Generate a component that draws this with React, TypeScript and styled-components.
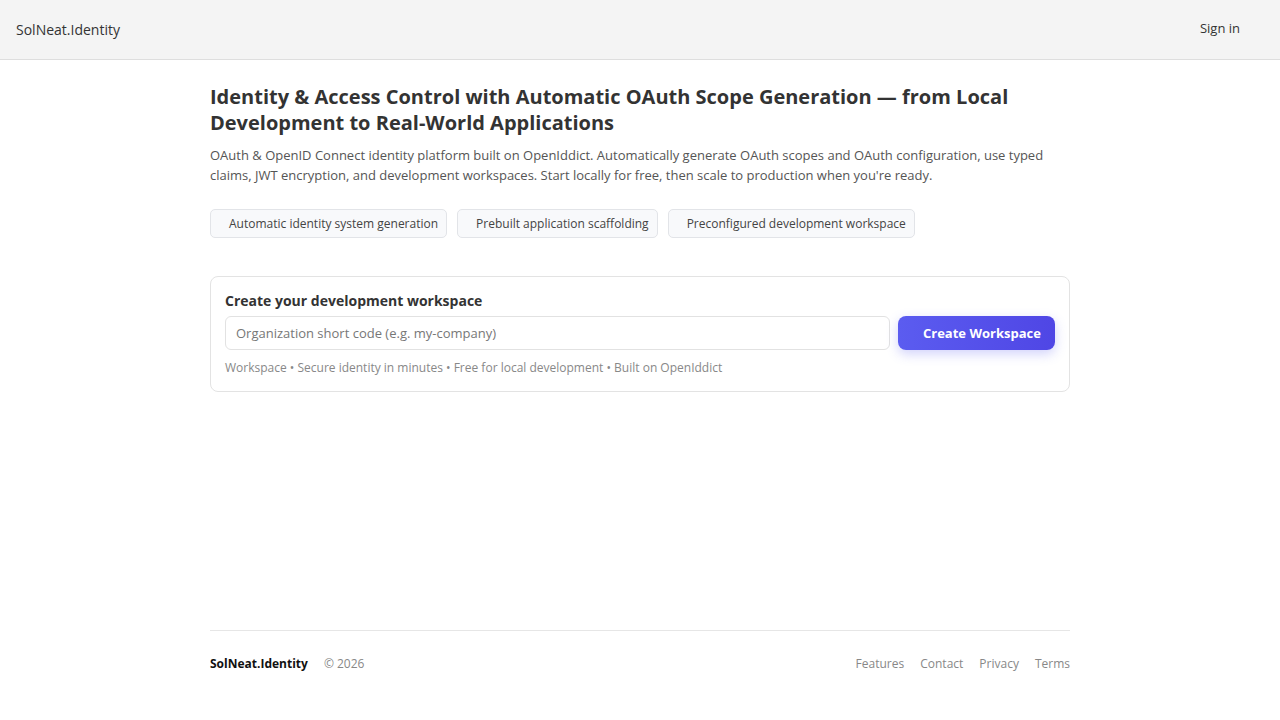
import React from "react";
import styled, { createGlobalStyle } from "styled-components";

const Global = createGlobalStyle`
  html, body { margin: 0; padding: 0; }
  body { font-family: "Open Sans", "Noto Sans", sans-serif; background: #fff; color: #333; }
  * { box-sizing: border-box; }
`;

const Page = styled.div`
  min-height: 100vh;
  display: flex;
  flex-direction: column;
`;

const Header = styled.header`
  height: 60px;
  background: #f4f4f4;
  border-bottom: 1px solid #dedede;
  display: flex;
  align-items: center;
  justify-content: space-between;
  padding: 0 40px 0 16px;
`;

const Brand = styled.div`
  font-size: 14px;
  color: #333;
`;

const SignIn = styled.a`
  font-size: 13px;
  color: #333;
  text-decoration: none;
  margin-top: -3px;
`;

const Main = styled.main`
  flex: 1;
  width: 860px;
  margin: 0 auto;
  padding-top: 24px;
`;

const Title = styled.h1`
  margin: 0;
  font-size: 20px;
  line-height: 26px;
  font-weight: 700;
  color: #333;
`;

const Lead = styled.p`
  margin: 9px 0 0;
  font-size: 13px;
  line-height: 20px;
  color: #555;
`;

const Chips = styled.div`
  display: flex;
  gap: 10px;
  margin-top: 24px;
`;

const Chip = styled.span`
  display: inline-flex;
  align-items: center;
  height: 29px;
  padding: 0 8px 0 18px;
  font-size: 12px;
  color: #444;
  background: #f8f9fb;
  border: 1px solid #e2e4e8;
  border-radius: 5px;
`;

const Card = styled.section`
  margin-top: 38px;
  border: 1px solid #e3e3e3;
  border-radius: 8px;
  padding: 14px 14px 14px;
`;

const CardTitle = styled.h2`
  margin: 0;
  font-size: 14px;
  line-height: 20px;
  font-weight: 700;
  color: #333;
`;

const FormRow = styled.div`
  display: flex;
  gap: 8px;
  margin-top: 5px;
`;

const Input = styled.input`
  flex: 1;
  height: 34px;
  border: 1px solid #e2e2e2;
  border-radius: 6px;
  padding: 0 10px;
  font-family: inherit;
  font-size: 13px;
  color: #333;
  outline: none;
  &::placeholder { color: #777; }
`;

const Button = styled.button`
  height: 34px;
  width: 157px;
  border: none;
  border-radius: 8px;
  padding: 0 14px 0 25px;
  background: linear-gradient(90deg, #5b5cf0, #4f46e5);
  color: #fff;
  font-family: inherit;
  font-size: 13px;
  font-weight: 700;
  text-align: left;
  box-shadow: 0 4px 12px rgba(91, 92, 240, 0.28);
  cursor: pointer;
`;

const Meta = styled.div`
  margin-top: 9px;
  font-size: 12px;
  line-height: 18px;
  color: #888;
`;

const Footer = styled.footer`
  width: 860px;
  margin: 0 auto;
  border-top: 1px solid #e6e6e6;
  padding: 23px 0 46px;
  display: flex;
  align-items: center;
  justify-content: space-between;
  font-size: 12px;
  line-height: 20px;
`;

const FootLeft = styled.div`
  display: flex;
  gap: 16px;
  align-items: center;
`;

const FootBrand = styled.span`
  font-weight: 700;
  color: #111;
`;

const Copy = styled.span`
  color: #888;
`;

const FootLinks = styled.nav`
  display: flex;
  gap: 16px;
`;

const FootLink = styled.a`
  color: #888;
  text-decoration: none;
`;

export default function App() {
  return (
    <Page>
      <Global />
      <Header>
        <Brand>SolNeat.Identity</Brand>
        <SignIn href="#">Sign in</SignIn>
      </Header>
      <Main>
        <Title>
          Identity &amp; Access Control with Automatic OAuth Scope Generation — from Local Development to Real-World Applications
        </Title>
        <Lead>
          OAuth &amp; OpenID Connect identity platform built on OpenIddict. Automatically generate OAuth scopes and OAuth configuration, use typed claims, JWT encryption, and development workspaces. Start locally for free, then scale to production when you're ready.
        </Lead>
        <Chips>
          <Chip>Automatic identity system generation</Chip>
          <Chip>Prebuilt application scaffolding</Chip>
          <Chip>Preconfigured development workspace</Chip>
        </Chips>
        <Card>
          <CardTitle>Create your development workspace</CardTitle>
          <FormRow>
            <Input placeholder="Organization short code (e.g. my-company)" />
            <Button>Create Workspace</Button>
          </FormRow>
          <Meta>Workspace • Secure identity in minutes • Free for local development • Built on OpenIddict</Meta>
        </Card>
      </Main>
      <Footer>
        <FootLeft>
          <FootBrand>SolNeat.Identity</FootBrand>
          <Copy>© 2026</Copy>
        </FootLeft>
        <FootLinks>
          <FootLink href="#">Features</FootLink>
          <FootLink href="#">Contact</FootLink>
          <FootLink href="#">Privacy</FootLink>
          <FootLink href="#">Terms</FootLink>
        </FootLinks>
      </Footer>
    </Page>
  );
}
